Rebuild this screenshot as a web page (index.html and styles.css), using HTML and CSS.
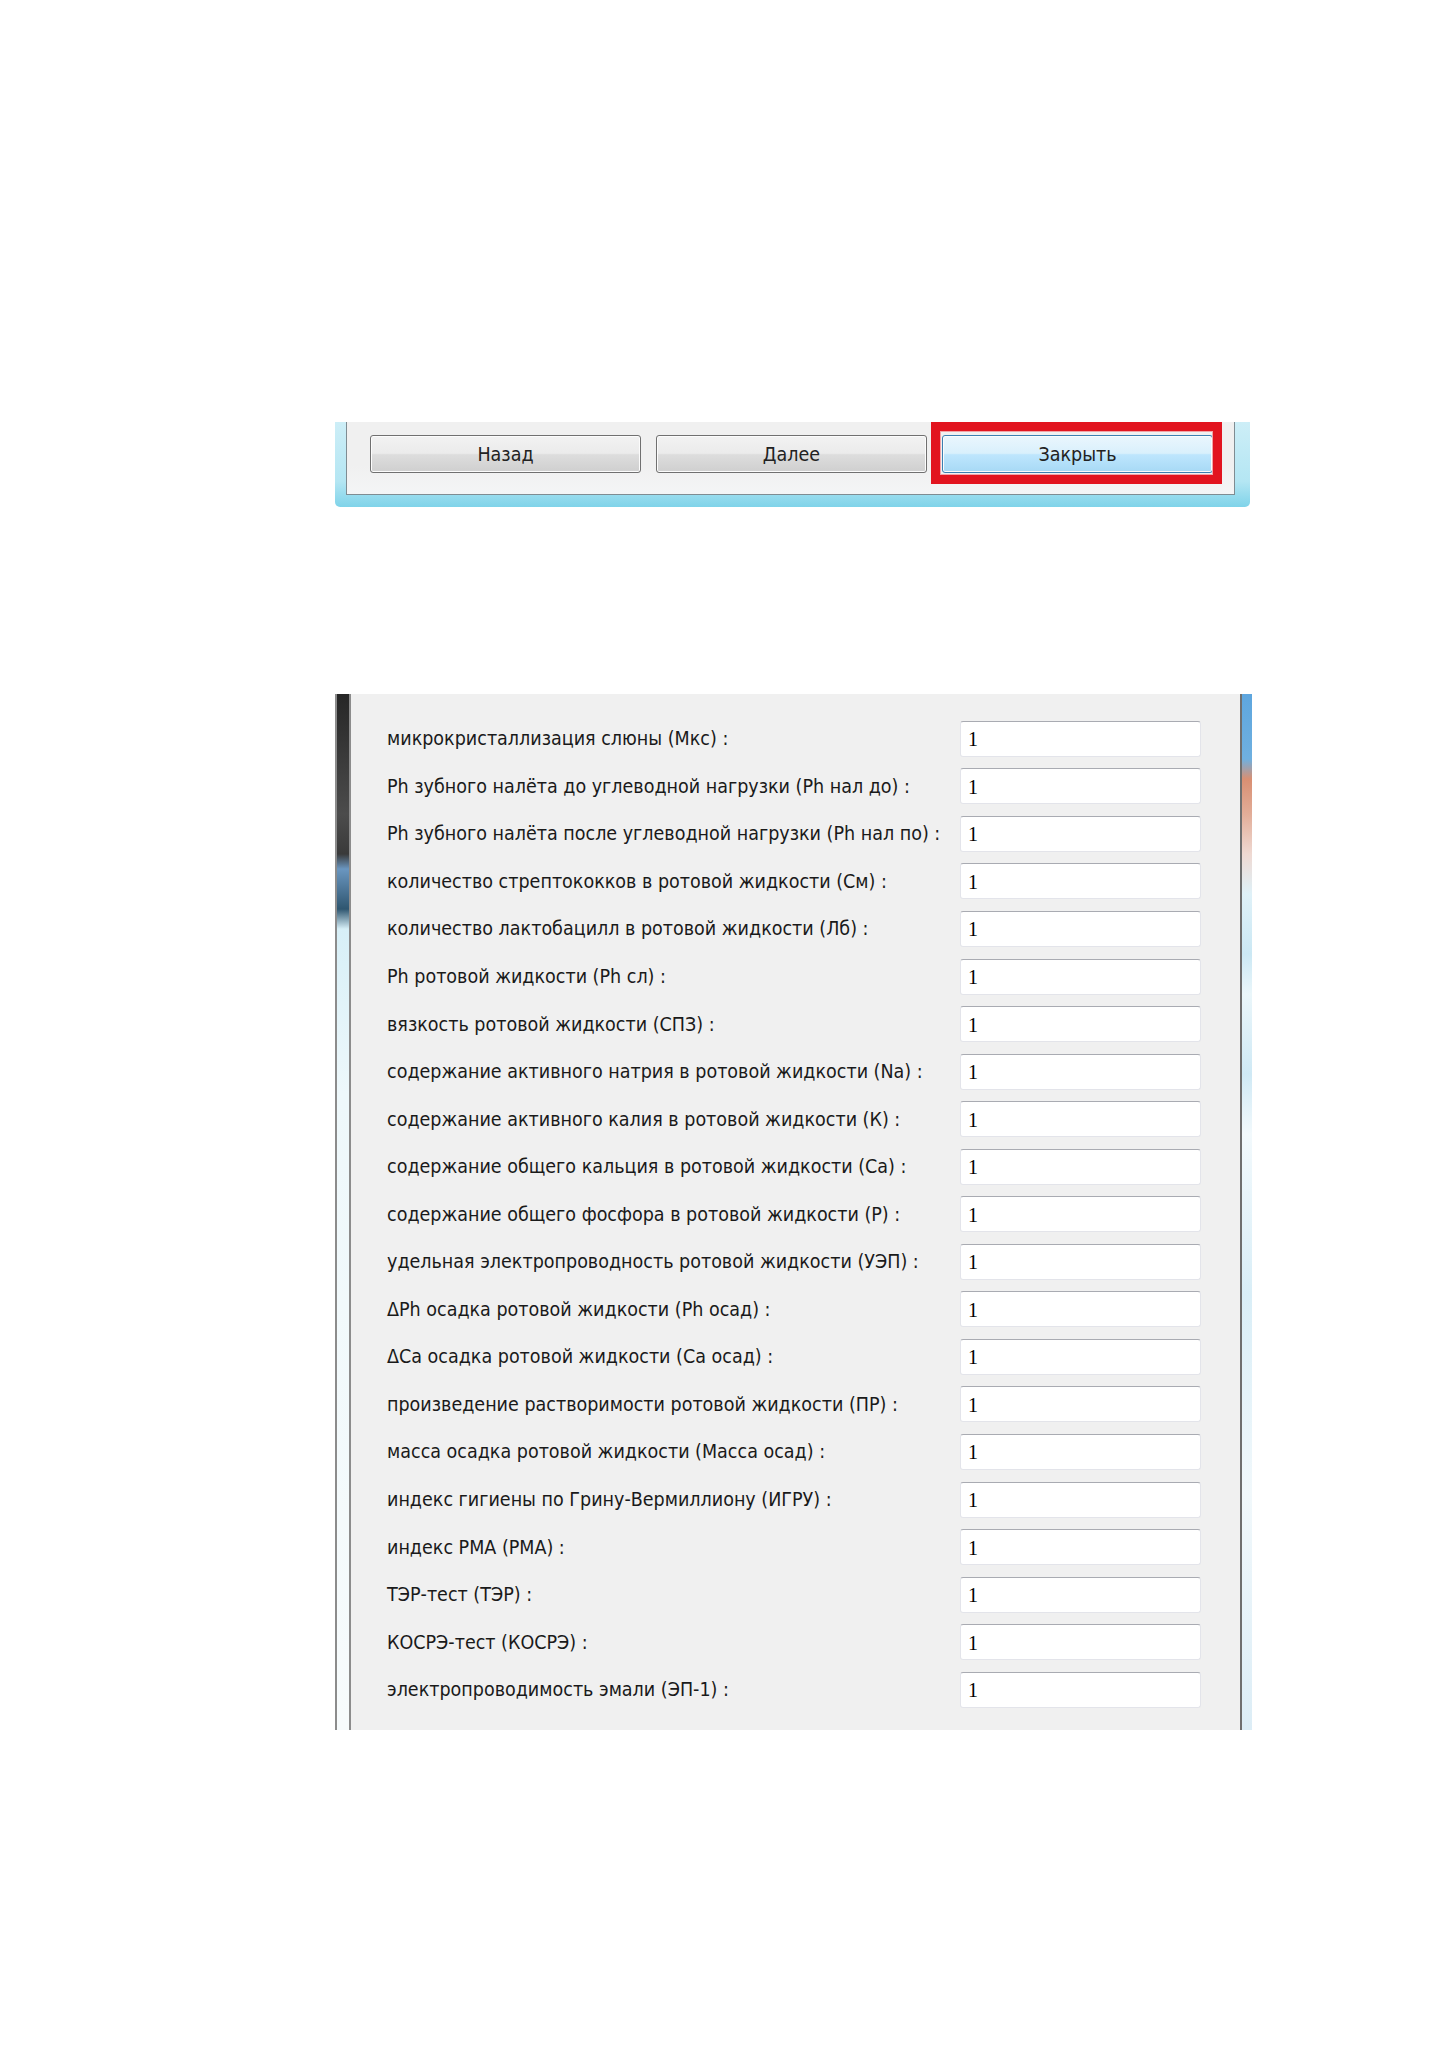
FILE: index.html
```html
<!DOCTYPE html>
<html lang="ru">
<head>
    <meta charset="UTF-8">
    <meta name="viewport" content="width=device-width, initial-scale=1.0">
    <title>Анкета</title>
    <link rel="stylesheet" href="styles.css">
</head>
<body>
    <div class="page">
        <section class="nav-window">
            <div class="nav-dialog">
                <button class="btn">Назад</button>
                <button class="btn">Далее</button>
                <button class="btn btn-focus">Закрыть<span class="mark"></span></button>
            </div>
        </section>

        <section class="form-window">
            <div class="edge-left"></div>
            <div class="form-body">
                <label for="f1">микрокристаллизация слюны (Мкс) :</label>
                <input type="text" id="f1" value="1">

                <label for="f2">Ph зубного налёта до углеводной нагрузки (Ph нал до) :</label>
                <input type="text" id="f2" value="1">

                <label for="f3">Ph зубного налёта после углеводной нагрузки (Ph нал по) :</label>
                <input type="text" id="f3" value="1">

                <label for="f4">количество стрептококков в ротовой жидкости (См) :</label>
                <input type="text" id="f4" value="1">

                <label for="f5">количество лактобацилл в ротовой жидкости (Лб) :</label>
                <input type="text" id="f5" value="1">

                <label for="f6">Ph ротовой жидкости (Ph сл) :</label>
                <input type="text" id="f6" value="1">

                <label for="f7">вязкость ротовой жидкости (СПЗ) :</label>
                <input type="text" id="f7" value="1">

                <label for="f8">содержание активного натрия в ротовой жидкости (Na) :</label>
                <input type="text" id="f8" value="1">

                <label for="f9">содержание активного калия в ротовой жидкости (К) :</label>
                <input type="text" id="f9" value="1">

                <label for="f10">содержание общего кальция в ротовой жидкости (Са) :</label>
                <input type="text" id="f10" value="1">

                <label for="f11">содержание общего фосфора в ротовой жидкости (Р) :</label>
                <input type="text" id="f11" value="1">

                <label for="f12">удельная электропроводность ротовой жидкости (УЭП) :</label>
                <input type="text" id="f12" value="1">

                <label for="f13">ΔPh осадка ротовой жидкости (Ph осад) :</label>
                <input type="text" id="f13" value="1">

                <label for="f14">ΔCa осадка ротовой жидкости (Ca осад) :</label>
                <input type="text" id="f14" value="1">

                <label for="f15">произведение растворимости ротовой жидкости (ПР) :</label>
                <input type="text" id="f15" value="1">

                <label for="f16">масса осадка ротовой жидкости (Масса осад) :</label>
                <input type="text" id="f16" value="1">

                <label for="f17">индекс гигиены по Грину-Вермиллиону (ИГРУ) :</label>
                <input type="text" id="f17" value="1">

                <label for="f18">индекс РМА (РМА) :</label>
                <input type="text" id="f18" value="1">

                <label for="f19">ТЭР-тест (ТЭР) :</label>
                <input type="text" id="f19" value="1">

                <label for="f20">КОСРЭ-тест (КОСРЭ) :</label>
                <input type="text" id="f20" value="1">

                <label for="f21">электропроводимость эмали (ЭП-1) :</label>
                <input type="text" id="f21" value="1">
            </div>
            <div class="edge-right"></div>
        </section>
    </div>
</body>
</html>
```

FILE: styles.css
```css
body {
    margin: 0;
    background-color: #ffffff;
    font-family: "DejaVu Sans Condensed", "DejaVu Sans", sans-serif;
    color: #1e1e1e;
}
.page {
    padding: 422px 0 0 335px;
}

/* верхнее окно с кнопками */
.nav-window {
    width: 915px;
    box-sizing: border-box;
    padding: 0 15px 12px 11px;
    background: linear-gradient(to bottom, #cdeef7 0%, #b4e6f3 70%, #7fd3e9 100%);
    border-radius: 0 0 5px 5px;
}
.nav-dialog {
    display: flex;
    gap: 15px;
    padding: 13px 21px 21px 23px;
    background: linear-gradient(to bottom, #f0f0f0 0%, #f0f0f0 60%, #f4f5f6 100%);
    border: 1px solid #7f8c92;
    border-top: none;
}
.btn {
    position: relative;
    width: 271px;
    height: 38px;
    border: 1px solid #707070;
    border-radius: 3px;
    background: linear-gradient(to bottom, #f2f2f2 0%, #ebebeb 48%, #dddddd 52%, #cfcfcf 100%);
    box-shadow: inset 0 0 0 1px #fcfcfc;
    font-family: "DejaVu Sans Condensed", "DejaVu Sans", sans-serif;
    font-size: 19.5px;
    color: #222222;
    padding: 0;
}
.btn-focus {
    border-color: #3c7fb1;
    background: linear-gradient(to bottom, #eaf6fd 0%, #d9f0fc 48%, #bee6fd 52%, #a7d9f5 100%);
}
.mark {
    position: absolute;
    left: -12px;
    right: -10px;
    top: -14px;
    bottom: -12px;
    border: 9px solid #e2141f;
    box-shadow: inset 0 0 0 1px #f2a3a7;
    pointer-events: none;
}

/* нижнее окно с полями */
.form-window {
    display: flex;
    width: 917px;
    height: 1036px;
    margin-top: 187px;
}
.edge-left {
    width: 16px;
    box-sizing: border-box;
    border-left: 2px solid #8c8c8c;
    border-right: 2px solid #8c8c8c;
    background: linear-gradient(to bottom, #262626 0, #4c4c4c 120px, #3a3a3a 160px, #6a96c0 175px, #2f5670 215px, #d7eff7 235px, #eef8fb 400px, #f7fbfc 100%);
}
.form-body {
    flex: 1;
    display: grid;
    grid-template-columns: 573px 241px;
    grid-auto-rows: 47.55px;
    align-items: center;
    align-content: start;
    padding: 21px 0 0 36px;
    background-color: #f0f0f0;
}
.form-body label {
    font-size: 19.5px;
    white-space: nowrap;
    color: #1a1a1a;
}
.form-body input {
    height: 36px;
    box-sizing: border-box;
    margin: 0;
    padding: 2px 7px 0;
    border: 1px solid #e3e4ea;
    border-top-color: #a9abb2;
    border-radius: 3px;
    background-color: #ffffff;
    font-family: "Liberation Serif", serif;
    font-size: 20px;
    color: #000000;
}
.edge-right {
    width: 12px;
    box-sizing: border-box;
    border-left: 2px solid #6f6f6f;
    background: linear-gradient(to bottom, #5ea6de 0, #6fb0e0 65px, #d98f72 85px, #e2ad98 120px, #efd9d2 160px, #dff1f8 200px, #cbe8f4 260px, #eaf6fa 300px, #cfe9f5 380px, #f2f9fc 440px, #d9eef7 600px, #f1f8fb 800px, #dcedf6 100%);
}
```
